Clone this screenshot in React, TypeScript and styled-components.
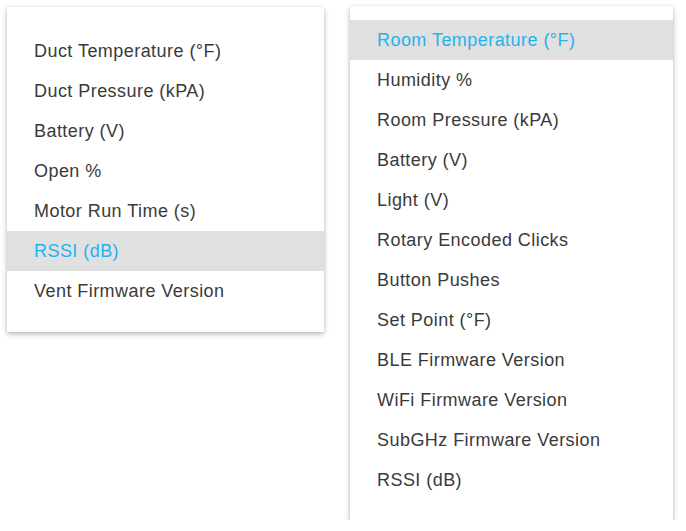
import * as React from "react";
import styled, { createGlobalStyle } from "styled-components";

const GlobalStyle = createGlobalStyle`
  html, body {
    margin: 0;
    padding: 0;
    background: #ffffff;
  }
  body {
    font-family: "Liberation Sans", Arial, Helvetica, sans-serif;
  }
`;

const Page = styled.div`
  display: flex;
  align-items: flex-start;
  gap: 26px;
  padding: 6px 0 0 7px;
`;

const Menu = styled.ul<{ $width: number; $top: number; $bottom: number; $shift?: number }>`
  list-style: none;
  margin: ${(p) => p.$shift || 0}px 0 0 0;
  width: ${(p) => p.$width}px;
  padding: ${(p) => p.$top}px 0 ${(p) => p.$bottom}px 0;
  background: #ffffff;
  box-shadow: 0 2px 5px rgba(0, 0, 0, 0.28), 0 0 2px rgba(0, 0, 0, 0.08);
`;

const Item = styled.li<{ $active?: boolean }>`
  height: 40px;
  display: flex;
  align-items: center;
  padding-left: 27px;
  font-size: 18px;
  letter-spacing: 0.45px;
  color: ${(p) => (p.$active ? "#1db4f0" : "#3a3a3a")};
  background: ${(p) => (p.$active ? "#e0e0e0" : "transparent")};
  white-space: nowrap;
`;

const ventItems = [
  "Duct Temperature (°F)",
  "Duct Pressure (kPA)",
  "Battery (V)",
  "Open %",
  "Motor Run Time (s)",
  "RSSI (dB)",
  "Vent Firmware Version",
];

const roomItems = [
  "Room Temperature (°F)",
  "Humidity %",
  "Room Pressure (kPA)",
  "Battery (V)",
  "Light (V)",
  "Rotary Encoded Clicks",
  "Button Pushes",
  "Set Point (°F)",
  "BLE Firmware Version",
  "WiFi Firmware Version",
  "SubGHz Firmware Version",
  "RSSI (dB)",
];

export default function App() {
  return (
    <>
      <GlobalStyle />
      <Page>
        <Menu $width={317} $top={24} $bottom={21} $shift={1}>
          {ventItems.map((label) => (
            <Item key={label} $active={label === "RSSI (dB)"}>
              {label}
            </Item>
          ))}
        </Menu>
        <Menu $width={323} $top={14} $bottom={20}>
          {roomItems.map((label, i) => (
            <Item key={label + i} $active={i === 0}>
              {label}
            </Item>
          ))}
        </Menu>
      </Page>
    </>
  );
}
